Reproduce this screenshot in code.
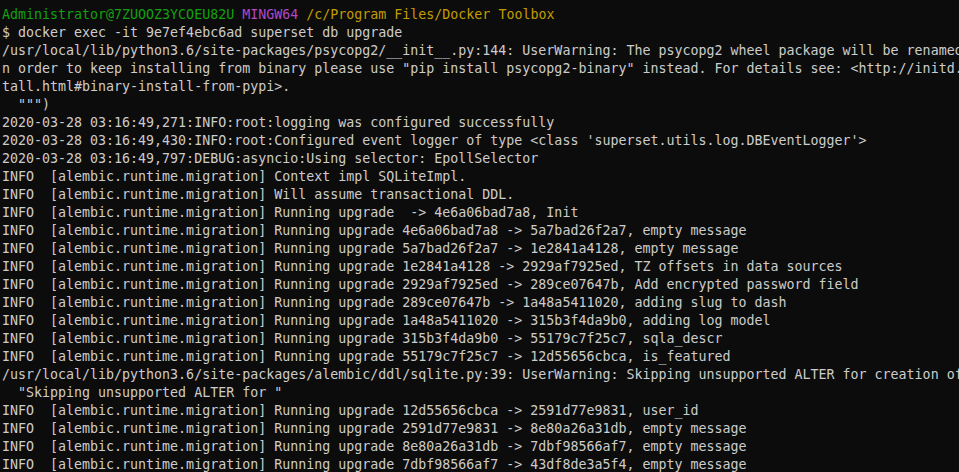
import React from "react";

const M = "INFO  [alembic.runtime.migration] ";

const lines: string[] = [
  "$ docker exec -it 9e7ef4ebc6ad superset db upgrade",
  "/usr/local/lib/python3.6/site-packages/psycopg2/__init__.py:144: UserWarning: The psycopg2 wheel package will be renamed from release 2.8; in",
  'n order to keep installing from binary please use "pip install psycopg2-binary" instead. For details see: <http://initd.org/psycopg/docs/ins',
  "tall.html#binary-install-from-pypi>.",
  '  """)',
  "2020-03-28 03:16:49,271:INFO:root:logging was configured successfully",
  "2020-03-28 03:16:49,430:INFO:root:Configured event logger of type <class 'superset.utils.log.DBEventLogger'>",
  "2020-03-28 03:16:49,797:DEBUG:asyncio:Using selector: EpollSelector",
  M + "Context impl SQLiteImpl.",
  M + "Will assume transactional DDL.",
  M + "Running upgrade  -> 4e6a06bad7a8, Init",
  M + "Running upgrade 4e6a06bad7a8 -> 5a7bad26f2a7, empty message",
  M + "Running upgrade 5a7bad26f2a7 -> 1e2841a4128, empty message",
  M + "Running upgrade 1e2841a4128 -> 2929af7925ed, TZ offsets in data sources",
  M + "Running upgrade 2929af7925ed -> 289ce07647b, Add encrypted password field",
  M + "Running upgrade 289ce07647b -> 1a48a5411020, adding slug to dash",
  M + "Running upgrade 1a48a5411020 -> 315b3f4da9b0, adding log model",
  M + "Running upgrade 315b3f4da9b0 -> 55179c7f25c7, sqla_descr",
  M + "Running upgrade 55179c7f25c7 -> 12d55656cbca, is_featured",
  "/usr/local/lib/python3.6/site-packages/alembic/ddl/sqlite.py:39: UserWarning: Skipping unsupported ALTER for creation of implicit constraint",
  '  "Skipping unsupported ALTER for "',
  M + "Running upgrade 12d55656cbca -> 2591d77e9831, user_id",
  M + "Running upgrade 2591d77e9831 -> 8e80a26a31db, empty message",
  M + "Running upgrade 8e80a26a31db -> 7dbf98566af7, empty message",
  M + "Running upgrade 7dbf98566af7 -> 43df8de3a5f4, empty message",
];

export default function App() {
  return (
    <div
      className="w-[959px] h-[472px] overflow-hidden bg-[#0c0c0c] text-[#cccccc] pl-[2px] pt-[6px] text-[13.3px] leading-[18px] whitespace-pre"
      style={{ fontFamily: '"DejaVu Sans Mono", "Liberation Mono", monospace' }}
    >
      <div>
        <span className="text-[#13a10e]">Administrator@7ZUOOZ3YCOEU82U</span>{" "}
        <span className="text-[#b148c6]">MINGW64</span>{" "}
        <span className="text-[#c19c00]">/c/Program Files/Docker Toolbox</span>
      </div>
      {lines.map((l, i) => (
        <div key={i}>{l}</div>
      ))}
    </div>
  );
}
